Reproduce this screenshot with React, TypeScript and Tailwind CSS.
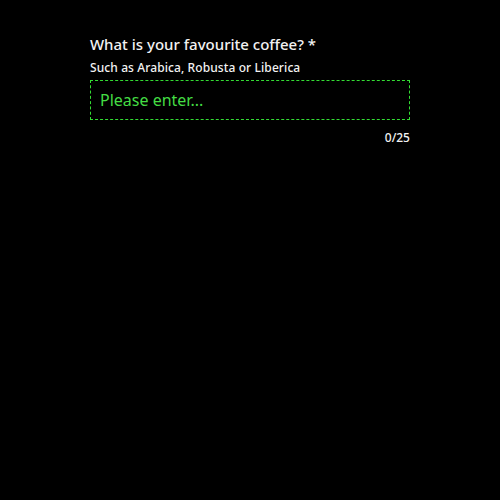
import React, { useState } from 'react';

export default function App() {
  const [value, setValue] = useState('');

  return (
    <div className="min-h-screen w-full bg-black font-['Noto_Sans','Open_Sans',sans-serif]">
      <div className="w-[320px] mx-auto pt-[34px]">
        <label className="block text-[15px] leading-[20px] font-medium text-[#f2f2f2]">
          What is your favourite coffee? *
        </label>
        <p className="mt-[5px] text-[12px] leading-[18px] tracking-[0.1px] font-medium text-[#f2f2f2]">
          Such as Arabica, Robusta or Liberica
        </p>
        <input
          value={value}
          maxLength={25}
          onChange={(e) => setValue(e.target.value)}
          placeholder="Please enter..."
          className="mt-[3px] block w-full h-[40px] px-[9px] bg-black border border-dashed border-[#33dd33] text-[16px] text-[#44dd44] placeholder:text-[#44dd44] outline-none"
        />
        <div className="mt-[10px] text-right text-[12px] leading-[16px] font-medium text-[#f2f2f2]">
          {value.length}/25
        </div>
      </div>
    </div>
  );
}
